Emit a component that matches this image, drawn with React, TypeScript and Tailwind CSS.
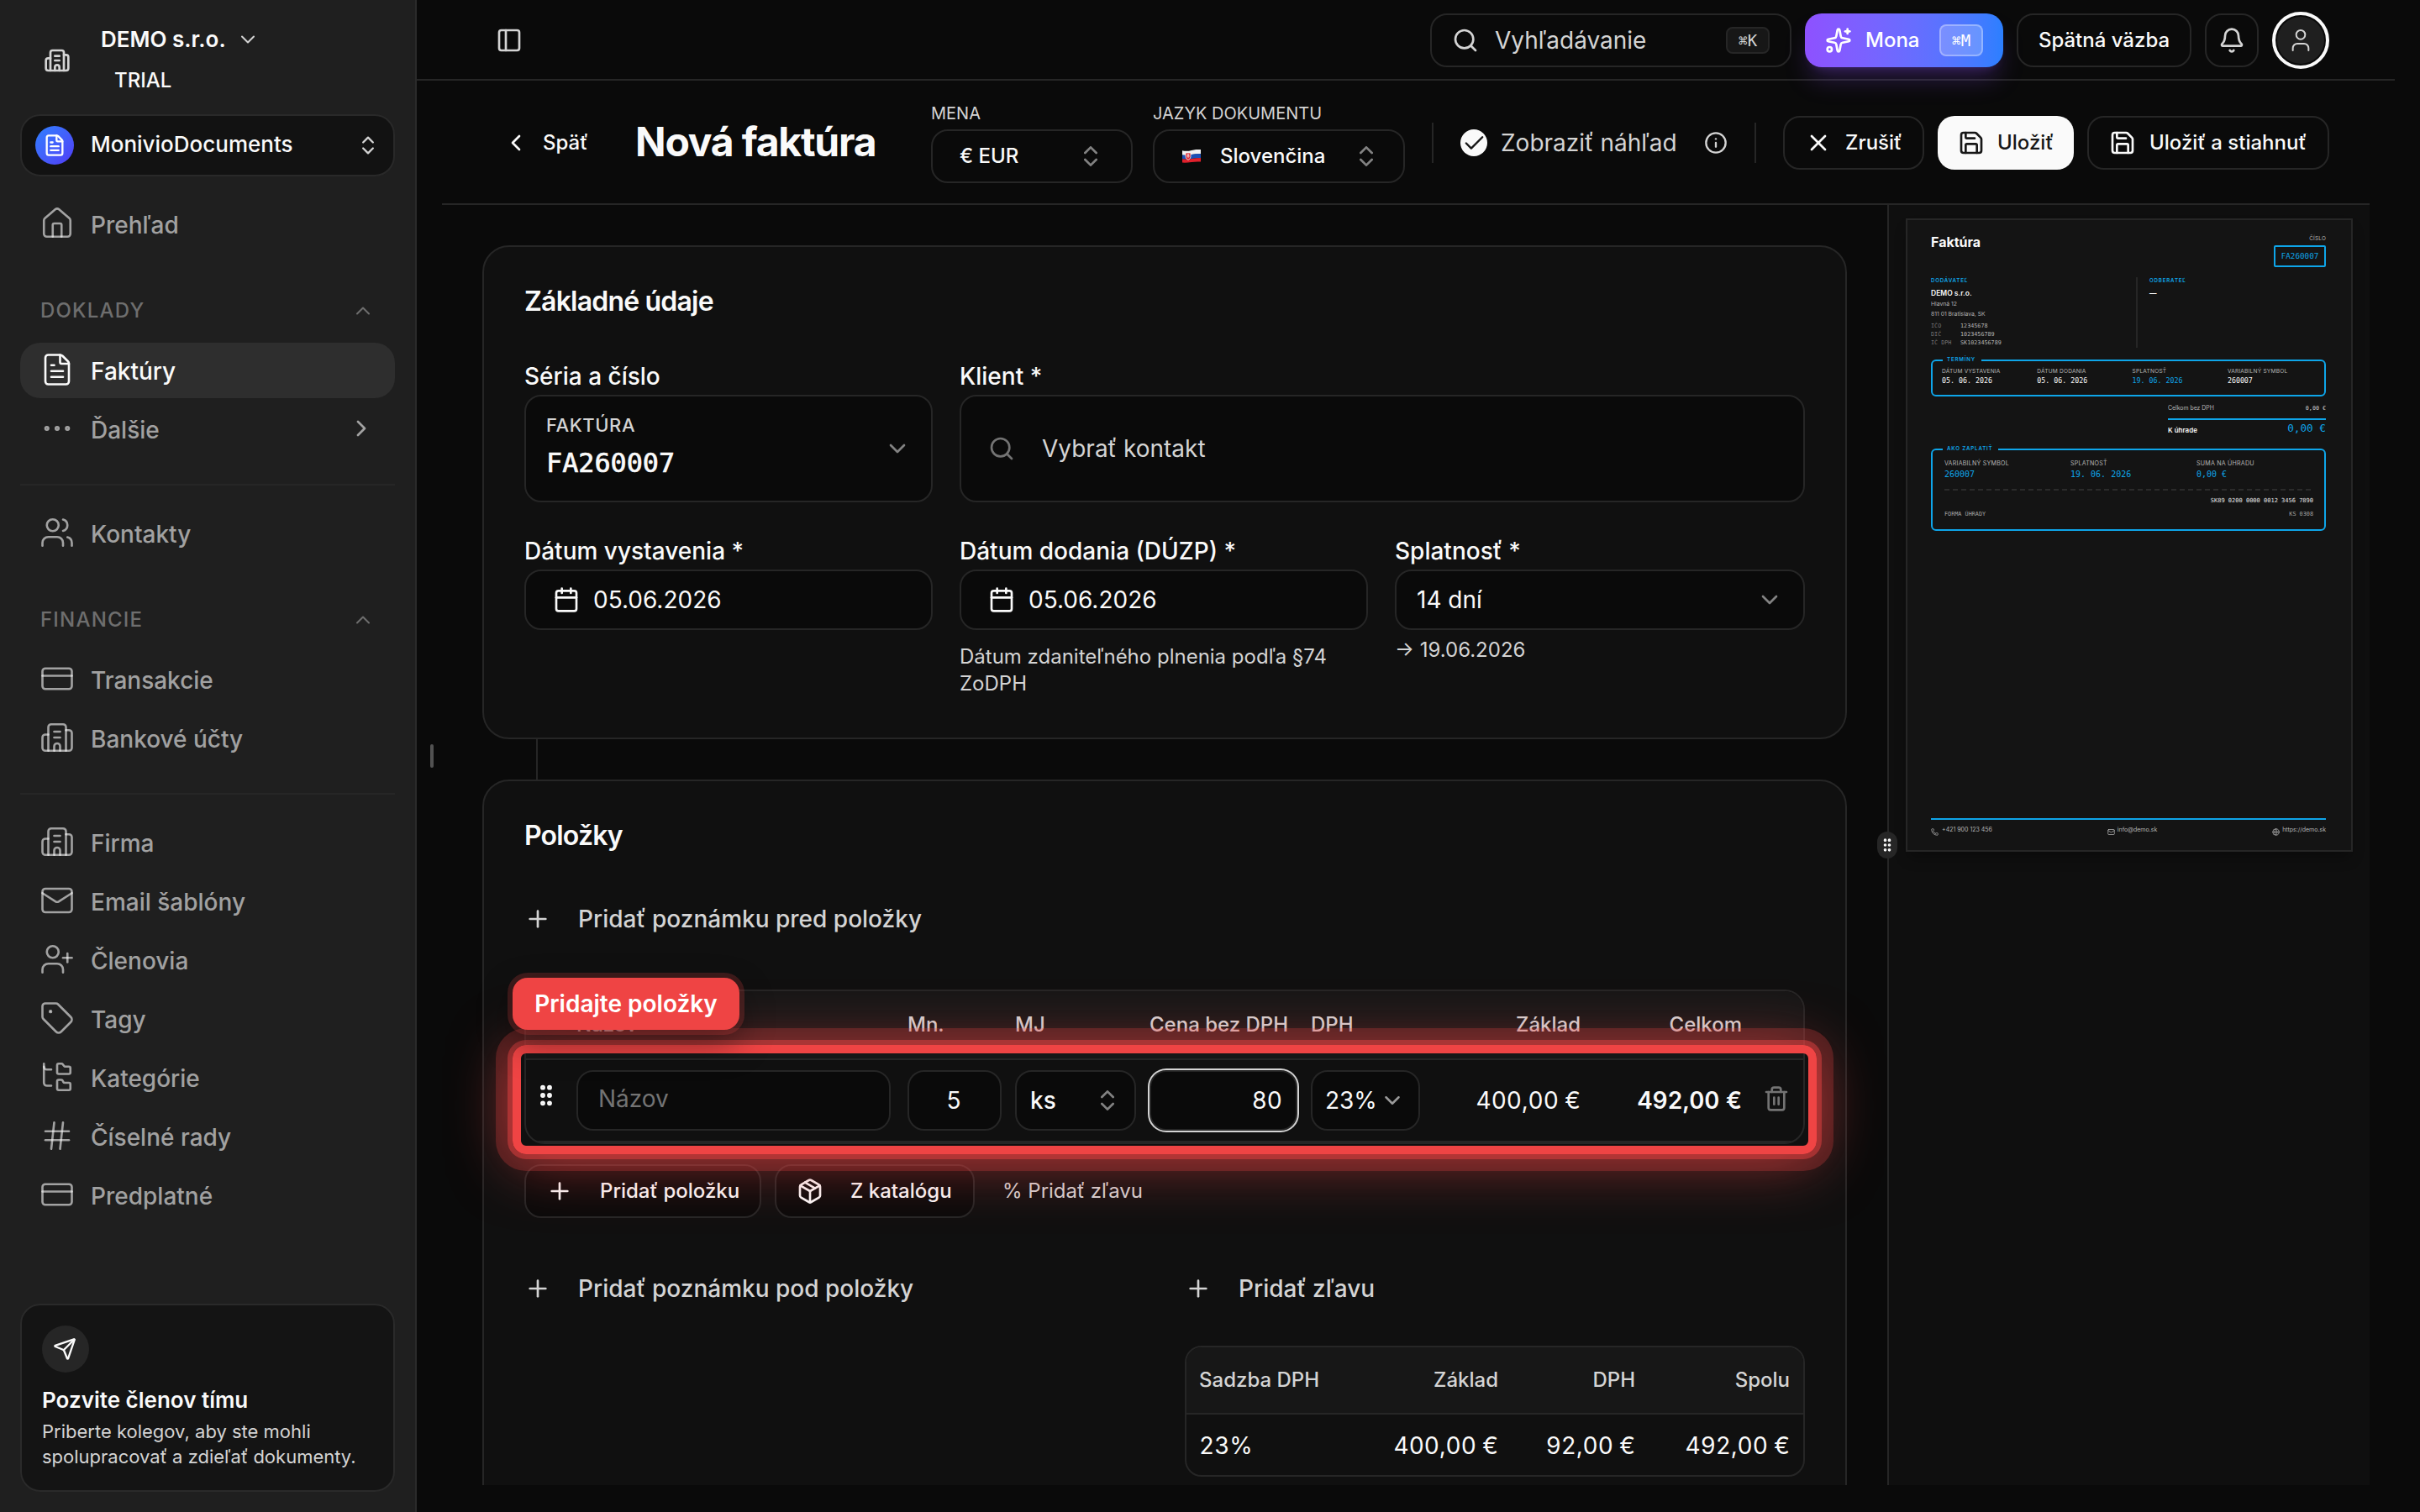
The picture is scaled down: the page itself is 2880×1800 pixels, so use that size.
import React from "react";
import {
  Bell,
  Building2,
  Calendar,
  Check,
  ChevronDown,
  ChevronLeft,
  ChevronRight,
  ChevronsUpDown,
  ChevronUp,
  CreditCard,
  Ellipsis,
  FileText,
  FolderTree,
  Globe,
  GripVertical,
  Hash,
  House,
  Info,
  Mail,
  Package,
  PanelLeft,
  Phone,
  Plus,
  Save,
  Search,
  Send,
  Sparkles,
  Tag,
  Trash2,
  User,
  UserPlus,
  Users,
  X,
  type LucideIcon,
} from "lucide-react";

function NavItem({ icon: Icon, label, active, more }: { icon: LucideIcon; label: string; active?: boolean; more?: boolean }) {
  return (
    <div
      className={
        active
          ? "flex h-[66px] items-center rounded-[24px] bg-[#2e2e2e] pl-[23px] text-[#fafafa]"
          : "flex h-[66px] items-center pl-[23px] text-[#fafafa]/60"
      }
    >
      <Icon size={42} strokeWidth={1.5} className="-mt-0.5 shrink-0" />
      <span className="ml-[19px] grow pt-0.5 text-[28px] font-medium">{label}</span>
      {more && <ChevronRight size={32} className="mr-6 -mt-0.5" />}
    </div>
  );
}

function NavHeading({ label }: { label: string }) {
  return (
    <div className="mt-9 mb-1.5 flex h-[66px] items-center justify-between pt-0.5 pr-6 pl-6 text-[#6e6e6e]">
      <span className="text-[24px] font-medium tracking-[0.05em]">{label}</span>
      <ChevronUp size={28} strokeWidth={1.75} />
    </div>
  );
}

function NavDivider() {
  return <div className="mt-8 mb-6 h-0.5 shrink-0 bg-[#262626]" />;
}

function Sidebar() {
  return (
    <aside className="flex h-[1800px] w-[496px] shrink-0 flex-col border-r-2 border-[#2a2a2a] bg-[#1f1f1f] px-6">
      <div className="flex h-[136px] shrink-0 pt-[30px] pl-7">
        <Building2 size={32} className="mt-[26px] text-[#d4d4d4]" />
        <div className="ml-9">
          <div className="-mt-px flex h-9 items-center text-[26px] leading-none font-semibold text-[#fafafa]">
            DEMO s.r.o.
            <ChevronDown size={28} strokeWidth={1.75} className="ml-3 text-[#d4d4d4]" />
          </div>
          <div className="mt-[13px] flex h-9 items-center pl-4 text-[24px] font-medium text-[#fafafa]">TRIAL</div>
        </div>
      </div>
      <div className="flex h-[74px] shrink-0 items-center rounded-[24px] border-2 border-[#292929] bg-[#121212] px-4">
        <div className="flex size-[46px] items-center justify-center rounded-full bg-gradient-to-br from-[#2b7fff] to-[#4f39f6] text-white">
          <FileText size={28} />
        </div>
        <span className="ml-5 grow pb-1 text-[26px] font-medium text-[#fafafa]">MonivioDocuments</span>
        <ChevronsUpDown size={28} className="text-[#d4d4d4]" />
      </div>
      <div className="h-6 shrink-0" />
      <NavItem icon={House} label="Prehľad" />
      <NavHeading label="DOKLADY" />
      <div className="flex flex-col gap-1">
        <NavItem icon={FileText} label="Faktúry" active />
        <NavItem icon={Ellipsis} label="Ďalšie" more />
      </div>
      <NavDivider />
      <NavItem icon={Users} label="Kontakty" />
      <NavHeading label="FINANCIE" />
      <div className="flex flex-col gap-1">
        <NavItem icon={CreditCard} label="Transakcie" />
        <NavItem icon={Building2} label="Bankové účty" />
      </div>
      <NavDivider />
      <div className="flex flex-col gap-1">
        <NavItem icon={Building2} label="Firma" />
        <NavItem icon={Mail} label="Email šablóny" />
        <NavItem icon={UserPlus} label="Členovia" />
        <NavItem icon={Tag} label="Tagy" />
        <NavItem icon={FolderTree} label="Kategórie" />
        <NavItem icon={Hash} label="Číselné rady" />
        <NavItem icon={CreditCard} label="Predplatné" />
      </div>
      <div className="mt-auto mb-6 h-[224px] shrink-0 rounded-[24px] border-2 border-[#2a2a2a] bg-[#141414] px-6 pt-6">
        <div className="flex size-14 items-center justify-center rounded-full bg-[#262626] pr-0.5 text-[#fafafa]">
          <Send size={28} />
        </div>
        <div className="mt-[15px] h-9 text-[26px] leading-9 font-semibold text-[#fafafa]">Pozvite členov tímu</div>
        <div className="mt-1 text-[22px] leading-[30px] whitespace-nowrap text-[#d4d4d4]">
          Priberte kolegov, aby ste mohli
          <br />
          spolupracovať a zdieľať dokumenty.
        </div>
      </div>
    </aside>
  );
}

function TopBar() {
  return (
    <header className="mr-[30px] flex h-24 items-center gap-4 border-b-2 border-[#262626] pt-0.5 pr-[78px] pl-[94px] text-[#fafafa]">
      <PanelLeft size={32} className="mr-auto text-[#d4d4d4]" />
      <div className="flex h-16 w-[430px] items-center rounded-[20px] border-2 border-[#262626] pr-6 pl-6">
        <Search size={32} className="text-[#d4d4d4]" />
        <span className="ml-[19px] grow text-[28px] text-[#d4d4d4]">Vyhľadávanie</span>
        <kbd className="flex h-8 w-[52px] items-center justify-center rounded-lg border-2 border-[#262626] bg-[#171717] font-['DejaVu_Sans_Mono'] text-[19px] text-[#d4d4d4]">
          <span className="text-[18px]">⌘</span>K
        </kbd>
      </div>
      <div className="flex h-16 w-[236px] items-center rounded-[20px] bg-gradient-to-r from-[#8e51ff] to-[#2b7fff] pl-6 text-white shadow-[0_20px_30px_-6px_rgba(142,81,255,0.25),0_8px_12px_-8px_rgba(142,81,255,0.25)]">
        <Sparkles size={32} />
        <span className="ml-4 w-[88px] text-[24px] font-medium">Mona</span>
        <kbd className="flex h-[38px] w-[52px] items-center justify-center rounded-lg border-2 border-white/30 bg-white/20 font-['DejaVu_Sans_Mono'] text-[19px]">
          <span className="text-[18px]">⌘</span>M
        </kbd>
      </div>
      <div className="flex h-16 w-[208px] items-center justify-center rounded-[20px] border-2 border-[#262626] text-[24px] font-medium">
        Spätná väzba
      </div>
      <div className="flex size-16 items-center justify-center rounded-[20px] border-2 border-[#262626]">
        <Bell size={32} className="text-[#d4d4d4]" />
      </div>
      <div className="flex size-[68px] items-center justify-center rounded-full border-4 border-[#fafafa] p-0.5">
        <div className="flex size-full items-center justify-center rounded-full bg-[#1f1f1f]">
          <User size={32} strokeWidth={1.5} className="text-[#d4d4d4]" />
        </div>
      </div>
    </header>
  );
}

function Flag() {
  return (
    <svg width="22" height="16" viewBox="0 0 22 16">
      <path d="M0 1.2 Q5 2.6 11 1 T22 0 V5.2 Q17 5 11 6 T0 6.4Z" fill="#f2f2f2" />
      <path d="M0 6.4 Q5 7.2 11 6 T22 5.2 V10 Q17 10 11 11 T0 11.2Z" fill="#1b4fb5" />
      <path d="M0 11.2 Q5 12 11 11 T22 10 V14.6 Q17 14 11 15 T0 15.6Z" fill="#e0202c" />
      <path d="M4 4 h6 v4.6 q0 2.6 -3 3.8 q-3 -1.2 -3 -3.8z" fill="#e0202c" stroke="#f2f2f2" strokeWidth="0.8" />
      <path d="M7 5 v5 M5.6 6.4 h2.8 M5.2 8 h3.6" stroke="#f2f2f2" strokeWidth="0.8" />
    </svg>
  );
}

function PageHeader() {
  return (
    <div className="mr-[60px] ml-[30px] flex h-[148px] items-center border-b-2 border-[#262626] pt-0.5 pl-[72px] text-[24px] font-medium text-[#fafafa]">
      <div className="flex w-[158px] items-center">
        <ChevronLeft size={32} />
        <span className="ml-4">Späť</span>
      </div>
      <h1 className="-mt-0.5 w-[352px] text-[48px] leading-none font-bold tracking-[-0.025em] whitespace-nowrap">Nová faktúra</h1>
      <div className="mt-[22px] w-60 self-start">
        <div className="h-[30px] text-[20px] leading-[30px] font-normal text-[#d4d4d4]">MENA</div>
        <div className="mt-1 flex h-16 items-center justify-between rounded-[20px] border-2 border-[#262626] pr-8 pl-8">
          € EUR
          <ChevronsUpDown size={32} className="opacity-50" />
        </div>
      </div>
      <div className="mt-[22px] ml-6 w-[300px] self-start">
        <div className="h-[30px] text-[20px] leading-[30px] font-normal text-[#d4d4d4]">JAZYK DOKUMENTU</div>
        <div className="mt-1 flex h-16 items-center rounded-[20px] border-2 border-[#262626] pr-7 pl-[33px]">
          <Flag />
          <span className="ml-[23px] grow">Slovenčina</span>
          <ChevronsUpDown size={32} className="opacity-50" />
        </div>
      </div>
      <div className="ml-8 h-12 w-0.5 bg-[#262626]" />
      <div className="ml-8 flex size-8 items-center justify-center rounded-full bg-[#fafafa] text-[#171717]">
        <Check size={29} />
      </div>
      <span className="ml-4 w-[210px] text-[28px] font-normal whitespace-nowrap text-[#d4d4d4]">Zobraziť náhľad</span>
      <Info size={28} className="ml-8 text-[#d4d4d4]" />
      <div className="mr-8 ml-8 h-12 w-0.5 bg-[#262626]" />
      <div className="flex h-16 w-[168px] shrink-0 items-center rounded-[20px] border-2 border-[#262626] pl-6">
        <X size={32} />
        <span className="ml-4">Zrušiť</span>
      </div>
      <div className="ml-4 flex h-16 w-[162px] shrink-0 items-center rounded-[20px] bg-[#fafafa] pl-6 text-[#171717]">
        <Save size={32} />
        <span className="ml-[15px]">Uložiť</span>
      </div>
      <div className="ml-4 flex h-16 w-[288px] shrink-0 items-center rounded-[20px] border-2 border-[#262626] pl-6">
        <Save size={32} />
        <span className="ml-4">Uložiť a stiahnuť</span>
      </div>
    </div>
  );
}

function Field({ label, className, children }: { label: string; className?: string; children: React.ReactNode }) {
  return (
    <div className={className}>
      <div className="mb-0.5 h-10 text-[28px] leading-10 font-medium">{label}</div>
      {children}
    </div>
  );
}

function DateBox() {
  return (
    <div className="flex h-[72px] items-center rounded-[20px] border-2 border-[#262626] bg-[#0a0a0a] pl-8 text-[28px]">
      <Calendar size={32} />
      <span className="ml-4">05.06.2026</span>
    </div>
  );
}

function BasicsCard() {
  return (
    <section className="h-[588px] shrink-0 rounded-[32px] border-2 border-[#262626] bg-[#101010] px-12 pt-[45px]">
      <h2 className="h-10 text-[32px] leading-10 font-semibold tracking-[-0.025em]">Základné údaje</h2>
      <div className="mt-[49px] grid grid-cols-[486px_486px_488px] gap-x-8 gap-y-[38px]">
        <Field label="Séria a číslo">
          <div className="flex h-32 items-center justify-between rounded-[20px] border-2 border-[#262626] bg-[#0a0a0a] pr-6 pl-6">
            <div>
              <div className="text-[22px] leading-8 font-medium tracking-[0.025em] text-[#d4d4d4]">FAKTÚRA</div>
              <div className="mt-[3px] mb-px font-['DejaVu_Sans_Mono'] text-[31.8px] leading-[52px] [-webkit-text-stroke:0.7px_#fafafa]">FA260007</div>
            </div>
            <ChevronDown size={32} className="opacity-50" />
          </div>
        </Field>
        <Field label="Klient *" className="col-span-2">
          <div className="flex h-32 items-center rounded-[20px] border-2 border-[#262626] bg-[#0a0a0a] pl-8">
            <Search size={32} className="text-[#737373]" />
            <span className="ml-8 text-[28px] text-[#d4d4d4]">Vybrať kontakt</span>
          </div>
        </Field>
        <Field label="Dátum vystavenia *">
          <DateBox />
        </Field>
        <Field label="Dátum dodania (DÚZP) *">
          <DateBox />
          <p className="mt-4 text-[24px] leading-8 text-[#d4d4d4]">Dátum zdaniteľného plnenia podľa §74 ZoDPH</p>
        </Field>
        <Field label="Splatnosť *">
          <div className="flex h-[72px] items-center justify-between rounded-[20px] border-2 border-[#262626] bg-[#0a0a0a] pr-6 pl-6 text-[28px]">
            14 dní
            <ChevronDown size={32} className="opacity-50" />
          </div>
          <p className="mt-2 text-[24px] leading-8 text-[#d4d4d4]">→ 19.06.2026</p>
        </Field>
      </div>
    </section>
  );
}

function AddLink({ label }: { label: string }) {
  return (
    <div className="flex h-10 items-center text-[28px] font-medium text-[#d4d4d4]">
      <Plus size={32} />
      <span className="ml-8">{label}</span>
    </div>
  );
}

const itemColumns = "grid grid-cols-[60px_394px_128px_160px_192px_130px_191px_192px_1fr] items-center";

function ItemsTable() {
  return (
    <div className="relative mt-16">
      <div className="h-[184px] overflow-hidden rounded-[24px] border-2 border-[#262626]">
        <div className={`${itemColumns} h-[82px] border-b-2 border-[#262626] bg-[#171717] text-[24px] font-medium text-[#d4d4d4]`}>
          <span />
          <span>Názov *</span>
          <span>Mn.</span>
          <span>MJ</span>
          <span className="whitespace-nowrap">Cena bez DPH</span>
          <span>DPH</span>
          <span className="text-right">Základ</span>
          <span className="text-right">Celkom</span>
        </div>
        <div className={`${itemColumns} h-[98px] border-b-2 border-[#262626] text-[28px]`}>
          <GripVertical size={32} strokeWidth={2.4} className="-mt-3 ml-2" />
          <div className="mr-5 flex h-[72px] items-center rounded-[20px] border-2 border-[#262626] bg-[#0a0a0a] pb-1 pl-6 text-[#737373]">
            Názov
          </div>
          <div className="mr-4 flex h-[72px] items-center justify-center rounded-[20px] border-2 border-[#262626] bg-[#0a0a0a] pr-0.5">5</div>
          <div className="mr-4 flex h-[72px] items-center justify-between rounded-[20px] border-2 border-[#262626] bg-[#0a0a0a] pr-4 pl-4 font-medium">
            ks
            <ChevronsUpDown size={32} className="opacity-50" />
          </div>
          <div className="mr-4 flex h-[72px] items-center justify-end rounded-[20px] border-2 border-[#262626] bg-[#0a0a0a] pr-4 tabular-nums ring-2 ring-[#d4d4d4]">
            80
          </div>
          <div className="flex h-[72px] items-center rounded-[20px] border-2 border-[#262626] bg-[#0a0a0a] pl-[15px]">
            23%
            <ChevronDown size={30} className="ml-[3px] opacity-60" />
          </div>
          <span className="text-right tabular-nums">400,00 €</span>
          <span className="text-right font-semibold tabular-nums">492,00 €</span>
          <Trash2 size={32} className="-mt-1 ml-[25px] text-[#737373]" />
        </div>
      </div>
      <div className="pointer-events-none absolute top-[66px] -left-3.5 z-10 h-[130px] w-[1552px] rounded-[16px] border-[10px] border-[#ef4444] shadow-[0_0_0_6px_rgba(239,68,68,0.45),0_0_0_20px_rgba(239,68,68,0.25),0_8px_72px_rgba(239,68,68,0.6)]" />
      <div className="absolute -top-3.5 -left-3.5 z-10 flex h-[62px] w-[270px] items-center justify-center rounded-[18px] bg-[#ef4444] text-[28px] font-semibold whitespace-nowrap text-white shadow-[0_0_0_6px_rgba(239,68,68,0.2),0_16px_40px_rgba(0,0,0,0.45)]">
        Pridajte položky
      </div>
    </div>
  );
}

const taxColumns = "grid grid-cols-[180px_207px_163px_184px] items-center [&>*]:pr-4 [&>*]:pl-[15px]";

function ItemsCard() {
  return (
    <section className="h-[1000px] shrink-0 rounded-[32px] border-2 border-[#262626] bg-[#101010] px-12 pt-[45px]">
      <h2 className="h-10 text-[32px] leading-10 font-semibold tracking-[-0.025em]">Položky</h2>
      <div className="mt-[59px]">
        <AddLink label="Pridať poznámku pred položky" />
      </div>
      <ItemsTable />
      <div className="mt-6 flex h-16 items-center text-[24px] font-medium">
        <div className="flex h-16 w-[282px] items-center rounded-[20px] border-2 border-[#262626] bg-[#0a0a0a] pl-6">
          <Plus size={32} />
          <span className="ml-8">Pridať položku</span>
        </div>
        <div className="ml-4 flex h-16 w-[238px] items-center rounded-[20px] border-2 border-[#262626] bg-[#0a0a0a] pl-6">
          <Package size={32} />
          <span className="ml-8">Z katalógu</span>
        </div>
        <span className="ml-[33px] font-normal text-[#d4d4d4]">% Pridať zľavu</span>
      </div>
      <div className="mt-16 flex">
        <div className="w-[786px]">
          <AddLink label="Pridať poznámku pod položky" />
        </div>
        <div className="grow">
          <AddLink label="Pridať zľavu" />
          <div className="mt-12 h-[156px] overflow-hidden rounded-[20px] border-2 border-[#262626]">
            <div className={`${taxColumns} h-20 border-b-2 border-[#262626] bg-[#171717] text-[24px] font-medium text-[#d4d4d4]`}>
              <span className="whitespace-nowrap">Sadzba DPH</span>
              <span className="text-right">Základ</span>
              <span className="text-right">DPH</span>
              <span className="text-right">Spolu</span>
            </div>
            <div className={`${taxColumns} h-[73px] text-[28px] tabular-nums`}>
              <span>23%</span>
              <span className="text-right">400,00 €</span>
              <span className="text-right">92,00 €</span>
              <span className="text-right">492,00 €</span>
            </div>
          </div>
        </div>
      </div>
    </section>
  );
}

function DocMeta({ label, value, accent }: { label: string; value: string; accent?: boolean }) {
  return (
    <div className="w-[113.3px] shrink-0">
      <div className="h-2 text-[6.6px] leading-[8px] tracking-[0.03em] whitespace-nowrap text-[#b5b5b5]">{label}</div>
      <div
        className={
          accent
            ? "mt-0.5 font-['DejaVu_Sans_Mono'] text-[8.3px] leading-[10px] text-[#0ea5e9]"
            : "mt-0.5 font-['DejaVu_Sans_Mono'] text-[8.3px] leading-[10px] text-[#fafafa]"
        }
      >
        {value}
      </div>
    </div>
  );
}

function PayMeta({ label, value }: { label: string; value: string }) {
  return (
    <div className="w-[150px] shrink-0">
      <div className="h-2 text-[7.1px] leading-[8px] tracking-[0.03em] whitespace-nowrap text-[#b5b5b5]">{label}</div>
      <div className="mt-[2.5px] font-['DejaVu_Sans_Mono'] text-[10px] leading-[12px] text-[#0ea5e9]">{value}</div>
    </div>
  );
}

function IdLine({ label, value }: { label: string; value: string }) {
  return (
    <div className="flex h-2.5 font-['DejaVu_Sans_Mono'] text-[6.75px] leading-[10px]">
      <span className="w-[35px] text-[#737373]">{label}</span>
      <span className="text-[#b5b5b5]">{value}</span>
    </div>
  );
}

function InvoicePreview() {
  return (
    <aside className="relative w-[574px] shrink-0 border-l-2 border-[#262626] bg-[#0f0f0f] pt-4 pl-5">
      <div className="flex h-[754px] w-[532px] flex-col border-2 border-[#262626] bg-[#141414] pr-[30px] pl-7 text-[#b5b5b5] shadow-[0_10px_15px_-3px_rgba(0,0,0,0.3)]">
        <div className="flex justify-between">
          <div className="mt-4 text-[16px] leading-[20px] font-bold text-[#fafafa]">Faktúra</div>
          <div className="mt-[18px] flex flex-col items-end">
            <div className="h-2 text-[6.4px] leading-[8px] tracking-[0.03em]">ČÍSLO</div>
            <div className="mt-1 flex h-[26px] w-[62px] items-center justify-center rounded-[2px] border-2 border-[#0ea5e9] font-['DejaVu_Sans_Mono'] text-[9.25px] text-[#0ea5e9]">
              FA260007
            </div>
          </div>
        </div>
        <div className="mt-3 flex h-[84px]">
          <div className="w-[244px]">
            <div className="h-2 text-[6.2px] leading-[8px] font-semibold tracking-[0.13em] text-[#0ea5e9]">DODÁVATEĽ</div>
            <div className="mt-[5px] text-[8.5px] leading-[12px] font-semibold text-[#fafafa]">DEMO s.r.o.</div>
            <div className="mt-px text-[6.8px] leading-[12px]">
              Hlavná 12
              <br />
              811 01 Bratislava, SK
            </div>
            <div className="mt-[2.5px]">
              <IdLine label="IČO" value="12345678" />
              <IdLine label="DIČ" value="1023456789" />
              <IdLine label="IČ DPH" value="SK1023456789" />
            </div>
          </div>
          <div className="border-l-2 border-[#262626] pl-3.5">
            <div className="h-2 text-[6.2px] leading-[8px] font-semibold tracking-[0.13em] text-[#0ea5e9]">ODBERATEĽ</div>
            <div className="mt-[5px] text-[8.5px] leading-[12px] font-semibold text-[#fafafa]">—</div>
          </div>
        </div>
        <div className="relative mt-3.5 h-11 rounded-[6px] border-2 border-[#0ea5e9] pt-2 pl-[11px]">
          <div className="absolute -top-[6px] left-3 h-2 w-[46px] bg-[#141414] pl-[5px] text-[6.2px] leading-[8px] font-semibold tracking-[0.13em] text-[#0ea5e9]">
            TERMÍNY
          </div>
          <div className="flex">
            <DocMeta label="DÁTUM VYSTAVENIA" value="05. 06. 2026" />
            <DocMeta label="DÁTUM DODANIA" value="05. 06. 2026" />
            <DocMeta label="SPLATNOSŤ" value="19. 06. 2026" accent />
            <DocMeta label="VARIABILNÝ SYMBOL" value="260007" />
          </div>
        </div>
        <div className="mt-2 w-[188px] self-end">
          <div className="flex justify-between text-[6.9px] leading-[12px]">
            <span>Celkom bez DPH</span>
            <span className="font-['DejaVu_Sans_Mono'] text-[6.7px] text-[#d4d4d4]">0,00 €</span>
          </div>
          <div className="mt-1.5 flex h-[23px] justify-between border-t-2 border-[#0ea5e9]">
            <span className="pt-[1.5px] text-[8px] leading-[20px] font-semibold text-[#fafafa]">K úhrade</span>
            <span className="font-['DejaVu_Sans_Mono'] text-[12.7px] leading-[19px] text-[#0ea5e9]">0,00 €</span>
          </div>
        </div>
        <div className="relative mt-[13px] h-[98px] rounded-[6px] border-2 border-[#0ea5e9] pt-3 pr-[13px] pl-3.5">
          <div className="absolute -top-[6px] left-3 h-2 w-[66px] bg-[#141414] pl-[5px] text-[6.2px] leading-[8px] font-semibold tracking-[0.13em] whitespace-nowrap text-[#0ea5e9]">
            AKO ZAPLATIŤ
          </div>
          <div className="flex">
            <PayMeta label="VARIABILNÝ SYMBOL" value="260007" />
            <PayMeta label="SPLATNOSŤ" value="19. 06. 2026" />
            <PayMeta label="SUMA NA ÚHRADU" value="0,00 €" />
          </div>
          <svg className="mt-[11.5px] block" width="439" height="2">
            <line x1="0" y1="1" x2="439" y2="1" stroke="#2b2b2b" strokeWidth="2" strokeDasharray="6 4" />
          </svg>
          <div className="mt-[6.5px] text-right font-['DejaVu_Sans_Mono'] text-[7px] leading-[10px] text-[#e5e5e5]">
            SK89 0200 0000 0012 3456 7890
          </div>
          <div className="mt-[6px] flex justify-between font-['DejaVu_Sans_Mono'] text-[6.8px] leading-[10px] text-[#a3a3a3]">
            <span>FORMA ÚHRADY</span>
            <span>KS 0308</span>
          </div>
        </div>
        <div className="mt-auto flex h-[38px] justify-between border-t-2 border-[#0ea5e9] pt-1.5 text-[7px] leading-[12px]">
          <div className="flex">
            <Phone size={9} className="mt-1 mr-1" />
            +421 900 123 456
          </div>
          <div className="flex">
            <Mail size={9} className="mt-1 mr-[3px]" />
            info@demo.sk
          </div>
          <div className="flex">
            <Globe size={9} className="mt-1 mr-[3px]" />
            https://demo.sk
          </div>
        </div>
      </div>
      <div className="absolute top-[746px] -left-3.5 flex h-8 w-6 items-center justify-center rounded-full bg-[#262626] text-[#fafafa]">
        <GripVertical size={20} strokeWidth={2.4} />
      </div>
    </aside>
  );
}

export default function App() {
  return (
    <div className="relative flex h-[1800px] w-[2880px] overflow-hidden bg-[#0a0a0a] font-[Inter,sans-serif] text-[#fafafa]">
      <Sidebar />
      <div className="w-[2384px] shrink-0">
        <TopBar />
        <PageHeader />
        <div className="mx-[30px] flex h-[1524px]">
          <main className="flex w-[1720px] shrink-0 flex-col overflow-hidden pt-12 pr-12 pl-12">
            <BasicsCard />
            <div className="ml-16 h-12 w-0.5 shrink-0 bg-[#262626]" />
            <ItemsCard />
          </main>
          <InvoicePreview />
        </div>
      </div>
      <div className="absolute top-[886px] left-[512px] h-7 w-1 rounded-sm bg-[#525252]" />
    </div>
  );
}
